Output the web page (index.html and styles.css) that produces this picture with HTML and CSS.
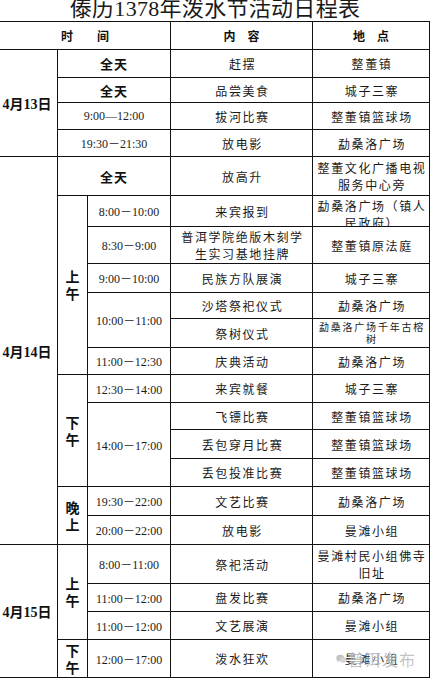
FILE: index.html
```html
<!DOCTYPE html>
<html lang="zh-CN">
<head>
<meta charset="utf-8">
<title>傣历1378年泼水节活动日程表</title>
<link rel="stylesheet" href="styles.css">
</head>
<body>
<div class="page">
  <div class="title">傣历1378年泼水节活动日程表</div>
  <div class="sheet">
    <!-- header -->
    <div class="c head" style="grid-area:1/1/2/4">时　　间</div>
    <div class="c head" style="grid-area:1/4/2/5">内　容</div>
    <div class="c head" style="grid-area:1/5/2/6">地　点</div>

    <!-- 4月13日 -->
    <div class="c date" style="grid-area:2/1/6/2">4月13日</div>
    <div class="c allday" style="grid-area:2/2/3/4">全天</div>
    <div class="c txt" style="grid-area:2/4/3/5">赶摆</div>
    <div class="c txt" style="grid-area:2/5/3/6">整董镇</div>
    <div class="c allday" style="grid-area:3/2/4/4">全天</div>
    <div class="c txt" style="grid-area:3/4/4/5">品尝美食</div>
    <div class="c txt" style="grid-area:3/5/4/6">城子三寨</div>
    <div class="c time" style="grid-area:4/2/5/4">9:00—12:00</div>
    <div class="c txt" style="grid-area:4/4/5/5">拔河比赛</div>
    <div class="c txt" style="grid-area:4/5/5/6">整董镇篮球场</div>
    <div class="c time" style="grid-area:5/2/6/4">19:30－21:30</div>
    <div class="c txt" style="grid-area:5/4/6/5">放电影</div>
    <div class="c txt" style="grid-area:5/5/6/6">勐桑洛广场</div>

    <!-- 4月14日 -->
    <div class="c date" style="grid-area:6/1/19/2">4月14日</div>
    <div class="c allday" style="grid-area:6/2/7/4">全天</div>
    <div class="c txt" style="grid-area:6/4/7/5">放高升</div>
    <div class="c txt two" style="grid-area:6/5/7/6">整董文化广播电视<br>服务中心旁</div>

    <div class="c period" style="grid-area:7/2/13/3">上<br>午</div>
    <div class="c time" style="grid-area:7/3/8/4">8:00－10:00</div>
    <div class="c txt" style="grid-area:7/4/8/5">来宾报到</div>
    <div class="c txt two top" style="grid-area:7/5/8/6">勐桑洛广场（镇人<br>民政府）</div>
    <div class="c time" style="grid-area:8/3/9/4">8:30－9:00</div>
    <div class="c txt two" style="grid-area:8/4/9/5">普洱学院绝版木刻学<br>生实习基地挂牌</div>
    <div class="c txt" style="grid-area:8/5/9/6">整董镇原法庭</div>
    <div class="c time" style="grid-area:9/3/10/4">9:00－10:00</div>
    <div class="c txt" style="grid-area:9/4/10/5">民族方队展演</div>
    <div class="c txt" style="grid-area:9/5/10/6">城子三寨</div>
    <div class="c time" style="grid-area:10/3/12/4">10:00－11:00</div>
    <div class="c txt" style="grid-area:10/4/11/5">沙塔祭祀仪式</div>
    <div class="c txt" style="grid-area:10/5/11/6">勐桑洛广场</div>
    <div class="c txt" style="grid-area:11/4/12/5">祭树仪式</div>
    <div class="c txt small" style="grid-area:11/5/12/6">勐桑洛广场千年古榕<br>树</div>
    <div class="c time" style="grid-area:12/3/13/4">11:00－12:30</div>
    <div class="c txt" style="grid-area:12/4/13/5">庆典活动</div>
    <div class="c txt" style="grid-area:12/5/13/6">勐桑洛广场</div>

    <div class="c period" style="grid-area:13/2/17/3">下<br>午</div>
    <div class="c time" style="grid-area:13/3/14/4">12:30－14:00</div>
    <div class="c txt" style="grid-area:13/4/14/5">来宾就餐</div>
    <div class="c txt" style="grid-area:13/5/14/6">城子三寨</div>
    <div class="c time" style="grid-area:14/3/17/4">14:00－17:00</div>
    <div class="c txt" style="grid-area:14/4/15/5">飞镖比赛</div>
    <div class="c txt" style="grid-area:14/5/15/6">整董镇篮球场</div>
    <div class="c txt" style="grid-area:15/4/16/5">丢包穿月比赛</div>
    <div class="c txt" style="grid-area:15/5/16/6">整董镇篮球场</div>
    <div class="c txt" style="grid-area:16/4/17/5">丢包投准比赛</div>
    <div class="c txt" style="grid-area:16/5/17/6">整董镇篮球场</div>

    <div class="c period" style="grid-area:17/2/19/3">晚<br>上</div>
    <div class="c time" style="grid-area:17/3/18/4">19:30－22:00</div>
    <div class="c txt" style="grid-area:17/4/18/5">文艺比赛</div>
    <div class="c txt" style="grid-area:17/5/18/6">勐桑洛广场</div>
    <div class="c time" style="grid-area:18/3/19/4">20:00－22:00</div>
    <div class="c txt" style="grid-area:18/4/19/5">放电影</div>
    <div class="c txt" style="grid-area:18/5/19/6">曼滩小组</div>

    <!-- 4月15日 -->
    <div class="c date" style="grid-area:19/1/23/2">4月15日</div>
    <div class="c period" style="grid-area:19/2/22/3">上<br>午</div>
    <div class="c time" style="grid-area:19/3/20/4">8:00－11:00</div>
    <div class="c txt" style="grid-area:19/4/20/5">祭祀活动</div>
    <div class="c txt two" style="grid-area:19/5/20/6">曼滩村民小组佛寺<br>旧址</div>
    <div class="c time" style="grid-area:20/3/21/4">11:00－12:00</div>
    <div class="c txt" style="grid-area:20/4/21/5">盘发比赛</div>
    <div class="c txt" style="grid-area:20/5/21/6">勐桑洛广场</div>
    <div class="c time" style="grid-area:21/3/22/4">11:00－12:00</div>
    <div class="c txt" style="grid-area:21/4/22/5">文艺展演</div>
    <div class="c txt" style="grid-area:21/5/22/6">曼滩小组</div>
    <div class="c period" style="grid-area:22/2/23/3">下<br>午</div>
    <div class="c time" style="grid-area:22/3/23/4">12:00－17:00</div>
    <div class="c txt" style="grid-area:22/4/23/5">泼水狂欢</div>
    <div class="c txt mark-host" style="grid-area:22/5/23/6">曼滩小组
      <span class="mark">
        <svg class="mark-icon" width="11" height="10" viewBox="0 0 11 10" aria-hidden="true">
          <ellipse cx="4.2" cy="4" rx="4" ry="3.3" fill="#c4c4c4"/>
          <path d="M1.6 6.4 L1.2 8.2 L3.2 7.1 Z" fill="#c4c4c4"/>
          <ellipse cx="7.3" cy="6" rx="3.4" ry="2.8" fill="#d6d6d6"/>
        </svg>
        <span class="mark-text">普洱发布</span>
      </span>
    </div>
  </div>
</div>
</body>
</html>
```

FILE: styles.css
```css
html, body {
  margin: 0;
  padding: 0;
  background: #ffffff;
}

.page {
  width: 432px;
  height: 678px;
  overflow: hidden;
  color: #111;
  font-family: "Noto Sans CJK SC", sans-serif;
}

.title {
  width: 430px;
  height: 21px;
  overflow: hidden;
  text-align: center;
  font-family: "Liberation Serif", "Noto Sans CJK SC", serif;
  font-size: 22px;
  line-height: 18px;
  color: #1a1a1a;
  letter-spacing: 0.3px;
}

.sheet {
  width: 430px;
  display: grid;
  grid-template-columns: 58px 30px 83px 142px 117px;
  grid-template-rows:
    28px 28px 25px 27px 27px
    39px 31px 37px 29px 26px 29px 27px
    28px 27px 29px 28px
    29px 29px
    39px 28px 28px 38px;
  border-top: 1px solid #111;
  box-sizing: border-box;
}

.c {
  box-sizing: border-box;
  border-right: 1px solid #111;
  border-bottom: 1px solid #111;
  display: flex;
  align-items: center;
  justify-content: center;
  text-align: center;
  overflow: hidden;
  min-width: 0;
  min-height: 0;
}

.head {
  font-size: 12px;
  font-weight: 700;
  line-height: 14px;
}

.date {
  font-family: "Liberation Serif", "Noto Sans CJK SC", serif;
  font-size: 14px;
  font-weight: 700;
  padding-right: 3px;
}

.allday {
  font-size: 13px;
  font-weight: 700;
  letter-spacing: 1px;
}

.period {
  font-size: 14px;
  font-weight: 700;
  line-height: 17px;
}

.time {
  font-family: "Liberation Serif", "Noto Sans CJK SC", serif;
  font-size: 12px;
  color: #1c1c1c;
}

.txt {
  font-size: 12px;
  letter-spacing: 1.6px;
  line-height: 17px;
  color: #1a1a1a;
  padding-left: 2px;
}

.two {
  line-height: 17px;
}

.top {
  align-items: flex-start;
  padding-top: 1px;
}

.small {
  font-size: 10px;
  line-height: 12px;
  letter-spacing: 1.8px;
}

.mark-host {
  position: relative;
}

.mark {
  position: absolute;
  left: 23px;
  top: 10px;
  display: flex;
  align-items: center;
  gap: 1px;
}

.mark-text {
  font-size: 16px;
  line-height: 18px;
  letter-spacing: 1px;
  color: rgba(170, 170, 170, 0.7);
  text-shadow: 0 0 2px rgba(255, 255, 255, 0.8);
}
```
